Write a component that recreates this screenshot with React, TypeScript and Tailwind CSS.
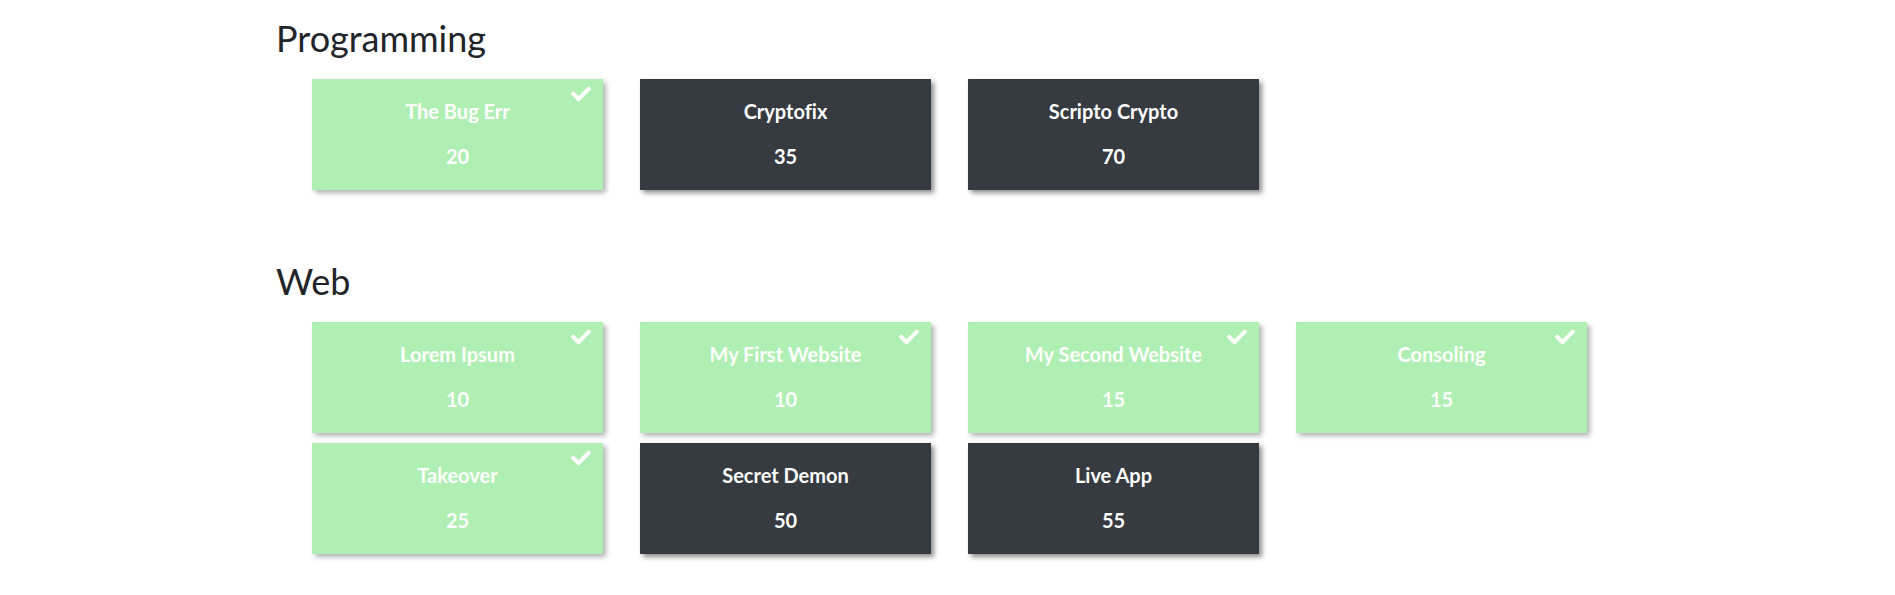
import { FaCheck } from 'react-icons/fa';

interface Challenge {
  name: string;
  points: number;
  solved: boolean;
}

interface Category {
  title: string;
  challenges: Challenge[];
}

const CATEGORIES: Category[] = [
  {
    title: 'Programming',
    challenges: [
      { name: 'The Bug Err', points: 20, solved: true },
      { name: 'Cryptofix', points: 35, solved: false },
      { name: 'Scripto Crypto', points: 70, solved: false },
    ],
  },
  {
    title: 'Web',
    challenges: [
      { name: 'Lorem Ipsum', points: 10, solved: true },
      { name: 'My First Website', points: 10, solved: true },
      { name: 'My Second Website', points: 15, solved: true },
      { name: 'Consoling', points: 15, solved: true },
      { name: 'Takeover', points: 25, solved: true },
      { name: 'Secret Demon', points: 50, solved: false },
      { name: 'Live App', points: 55, solved: false },
    ],
  },
];

function ChallengeCard({ challenge }: { challenge: Challenge }) {
  return (
    <div
      className={
        challenge.solved
          ? 'relative w-[291px] h-[111px] bg-[#b0efb3] text-white flex flex-col items-center pt-5 shadow-[3px_3px_5px_rgba(0,0,0,0.3)]'
          : 'relative w-[291px] h-[111px] bg-[#363a41] text-white flex flex-col items-center pt-5 shadow-[3px_3px_5px_rgba(0,0,0,0.45)]'
      }
    >
      {challenge.solved && (
        <FaCheck className="absolute top-[5px] right-[12px] text-white" size={20} />
      )}
      <p className="text-[20px] font-bold leading-[24px]">{challenge.name}</p>
      <p className="text-[20px] font-bold leading-[24px] mt-[21px]">{challenge.points}</p>
    </div>
  );
}

export default function App() {
  return (
    <div
      style={{ fontFamily: 'Lato, "Open Sans", sans-serif' }}
      className="w-[1895px] h-[595px] bg-white pl-[276px] pt-[17px] overflow-hidden [font-variant-ligatures:none]"
    >
      {CATEGORIES.map((cat, i) => (
        <section key={cat.title} className={i > 0 ? 'mt-[70px]' : ''}>
          <h2 className="text-[36px] leading-[1.2] font-normal text-[#212529]">{cat.title}</h2>
          <div className="mt-[19px] pl-9 grid grid-cols-[repeat(4,291px)] gap-x-[37px] gap-y-[10px]">
            {cat.challenges.map((c) => (
              <ChallengeCard key={c.name} challenge={c} />
            ))}
          </div>
        </section>
      ))}
    </div>
  );
}
